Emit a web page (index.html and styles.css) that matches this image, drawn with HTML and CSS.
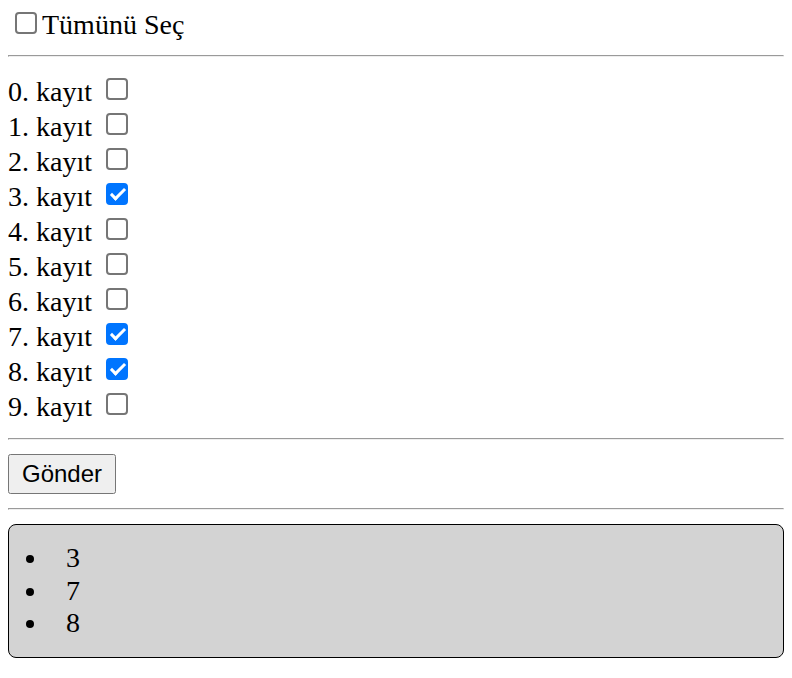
FILE: index.html
```html
<!DOCTYPE html>
<html lang="tr">
<head>
<meta charset="utf-8">
<link rel="stylesheet" href="styles.css">
</head>
<body>
<div class="top"><label class="all"><input type="checkbox" class="cb">Tümünü Seç</label></div>
<hr>
<div class="list">
<div class="row">0. kayıt <input type="checkbox" class="cb"></div>
<div class="row">1. kayıt <input type="checkbox" class="cb"></div>
<div class="row">2. kayıt <input type="checkbox" class="cb"></div>
<div class="row">3. kayıt <input type="checkbox" class="cb" checked></div>
<div class="row">4. kayıt <input type="checkbox" class="cb"></div>
<div class="row">5. kayıt <input type="checkbox" class="cb"></div>
<div class="row">6. kayıt <input type="checkbox" class="cb"></div>
<div class="row">7. kayıt <input type="checkbox" class="cb" checked></div>
<div class="row">8. kayıt <input type="checkbox" class="cb" checked></div>
<div class="row">9. kayıt <input type="checkbox" class="cb"></div>
</div>
<hr>
<button class="send">Gönder</button>
<hr>
<div class="result">
<ul>
<li>3</li>
<li>7</li>
<li>8</li>
</ul>
</div>
</body>
</html>
```
FILE: styles.css
```css
body {
  margin: 8px;
  font-family: "Liberation Serif", "Times New Roman", serif;
  font-size: 28px;
}
.top {
  height: 33px;
  line-height: 33px;
}
.cb {
  -webkit-appearance: none;
  appearance: none;
  position: relative;
  display: inline-block;
  box-sizing: border-box;
  width: 22px;
  height: 22px;
  margin: 0 5px 0 7px;
  border: 2px solid #767676;
  border-radius: 4px;
  background: #fff;
  vertical-align: 0;
}
.row .cb {
  vertical-align: 1px;
}
.cb:checked {
  background: #0075ff;
  border-color: #0075ff;
}
.cb:checked::after {
  content: "";
  position: absolute;
  left: 6px;
  top: 0;
  width: 5px;
  height: 12px;
  border: solid #fff;
  border-width: 0 3px 3px 0;
  transform: rotate(45deg);
}
hr {
  margin: 14px 0;
}
.list {
  margin-top: 17px;
}
.row {
  height: 35px;
  line-height: 35px;
}
.send {
  font-family: "Liberation Sans", Arial, sans-serif;
  font-size: 24px;
  padding: 4px 12px;
  display: block;
}
.result {
  background: #d3d3d3;
  border: 1px solid #000;
  border-radius: 8px;
}
.result ul {
  margin: 17px 0;
  padding-left: 40px;
  line-height: 32.5px;
}
.result li {
  padding-left: 17px;
}
```
